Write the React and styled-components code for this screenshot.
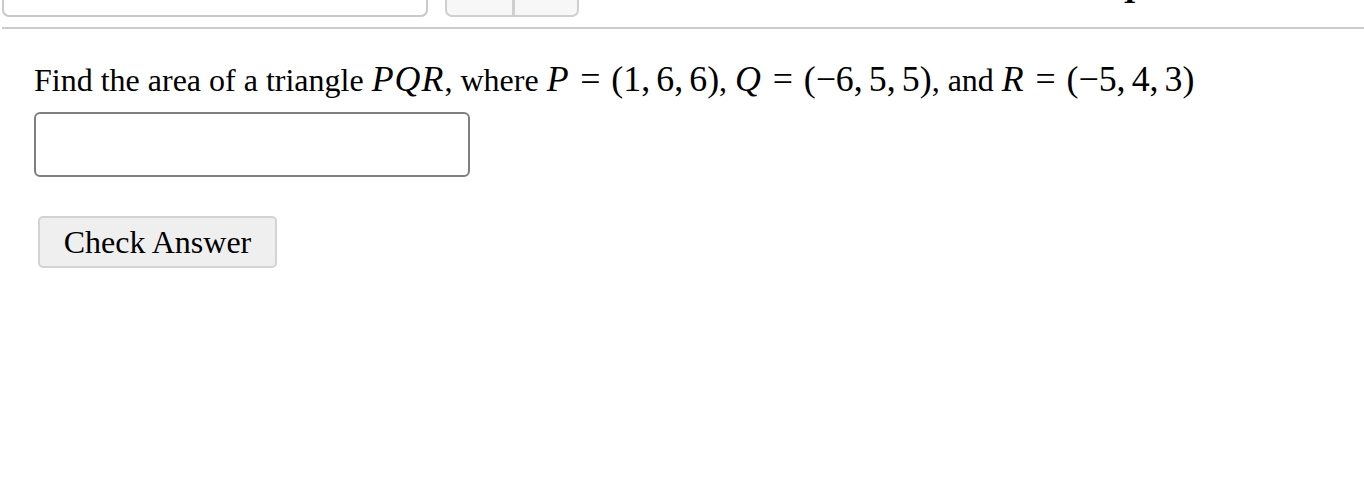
import React from 'react'
import styled, { createGlobalStyle } from 'styled-components';

const GlobalStyle = createGlobalStyle`
  html, body {
    margin: 0;
    padding: 0;
    background: #fff;
  }
  body {
    font-family: "Liberation Serif", "Times New Roman", serif;
    color: #000;
  }
`;

const Page = styled.div`
  width: 1364px;
  height: 500px;
  overflow: hidden;
  padding-left: 2px;
  box-sizing: border-box;
`;

const TopRow = styled.div`
  display: flex;
  align-items: flex-end;
  height: 50px;
  margin-top: -33px;
`;

const PrevInput = styled.div`
  width: 426px;
  height: 50px;
  box-sizing: border-box;
  border: 2px solid #c9c9c9;
  border-radius: 7px;
  background: #fff;
`;

const PrevButtons = styled.div`
  display: flex;
  margin-left: 17px;
  height: 50px;
  box-sizing: border-box;
  border: 2px solid #cfcfcf;
  border-radius: 7px;
  background: #f7f7f7;
  overflow: hidden;
`;

const PrevButton = styled.div`
  width: ${p => p.$w}px;
  height: 100%;
  & + & {
    border-left: 3px solid #cfcfcf;
  }
`;

const Glyph = styled.span`
  margin-left: auto;
  margin-right: 228px;
  font-size: 32px;
  line-height: 1;
  margin-bottom: 9px;
  font-weight: bold;
`;

const Rule = styled.hr`
  border: 0;
  height: 2px;
  background: #cccccc;
  margin: 10px 0 0 0;
`;

const Content = styled.div`
  padding: 28px 0 0 32px;
`;

const Question = styled.p`
  margin: 0;
  font-size: 32px;
  line-height: 44px;
  white-space: nowrap;
`;

const Math = styled.span`
  font-family: "Liberation Serif", "Times New Roman", serif;
  font-size: 1.12em;
`;

const Var = styled.i`
  font-style: italic;
  margin-right: 0.03em;
`;

const Rel = styled.span`
  margin: 0 0.3em;
`;

const Comma = styled.span`
  margin-right: 0.17em;
`;

const AnswerInput = styled.input`
  display: block;
  margin-top: 10px;
  width: 436px;
  height: 65px;
  box-sizing: border-box;
  border: 2px solid #7f7f7f;
  border-radius: 6px;
  font-size: 28px;
  padding: 0 10px;
  outline: none;
`;

const CheckButton = styled.button`
  display: block;
  margin: 39px 0 0 4px;
  width: 239px;
  height: 52px;
  box-sizing: border-box;
  background: #efefef;
  border: 2px solid #d3d3d3;
  border-radius: 5px;
  font-family: "Liberation Serif", "Times New Roman", serif;
  font-size: 32px;
  color: #000;
  padding: 0;
`;

const Point = ({ name, coords }) => (
  <Math>
    <Var>{name}</Var>
    <Rel>=</Rel>
    (
    {coords.map((c, i) => (
      <React.Fragment key={i}>
        {c}
        {i < coords.length - 1 && <Comma>,</Comma>}
      </React.Fragment>
    ))}
    )
  </Math>
);

const App = () => {
  return (
    <>
      <GlobalStyle />
      <Page>
        <TopRow>
          <PrevInput />
          <PrevButtons>
            <PrevButton $w={65} />
            <PrevButton $w={62} />
          </PrevButtons>
          <Glyph>I</Glyph>
        </TopRow>
        <Rule />
        <Content>
          <Question>
            Find the area of a triangle <Math><Var>P</Var><Var>Q</Var><Var>R</Var></Math>, where{' '}
            <Point name="P" coords={['1', '6', '6']} />, <Point name="Q" coords={['−6', '5', '5']} />, and{' '}
            <Point name="R" coords={['−5', '4', '3']} />
          </Question>
          <AnswerInput type="text" />
          <CheckButton>Check Answer</CheckButton>
        </Content>
      </Page>
    </>
  )
}

export default App
